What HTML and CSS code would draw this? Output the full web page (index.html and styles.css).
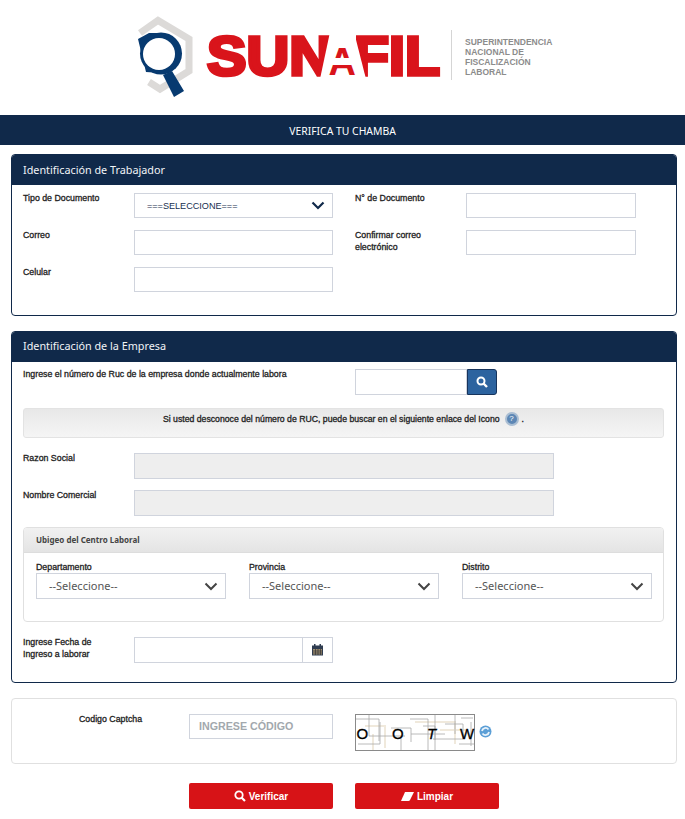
FILE: index.html
```html
<!DOCTYPE html>
<html lang="es">
<head>
<meta charset="utf-8">
<title>Verifica tu chamba</title>
<link rel="stylesheet" href="styles.css">
</head>
<body>
<header class="logo-wrap">
  <svg class="logo" width="420" height="84" viewBox="0 0 420 84">
    <path d="M14 67 L25 74 L54 56 L54 24 L23 5.500 L5 18" fill="none" stroke="#dcdad8" stroke-width="7"/>
    <circle cx="26" cy="38.500" r="21" fill="#073a70"/>
    <path d="M3 24 L11 57 L26 58 L26 18 L14 18 Z M37 56 L49 76 L39 82 L28 60 Z" fill="#073a70"/>
    <circle cx="24" cy="39" r="16" fill="#fff"/>
    <text class="logo-word" x="72" y="60" textLength="125" lengthAdjust="spacingAndGlyphs">SUN</text>
    <text class="logo-word" x="219" y="60" textLength="86" lengthAdjust="spacingAndGlyphs">FIL</text>
    <path d="M195 17 H212 V64 H185 Z" fill="#fff"/>
    <path d="M212 17 H219 L231 64 H212 Z" fill="#fff"/>
    <text class="logo-a" x="193.500" y="60">A</text>
    <rect x="194" y="43" width="24" height="7" fill="#fff"/>
    <rect x="316" y="15" width="1" height="50" fill="#d5d5d5"/>
    <text class="logo-sub" x="330" y="30">SUPERINTENDENCIA</text>
    <text class="logo-sub" x="330" y="40">NACIONAL DE</text>
    <text class="logo-sub" x="330" y="50">FISCALIZACIÓN</text>
    <text class="logo-sub" x="330" y="60">LABORAL</text>
  </svg>
</header>
<div class="title-bar">VERIFICA TU CHAMBA</div>

<main class="content">
  <section class="panel panel-worker">
    <h2 class="panel-head">Identificación de Trabajador</h2>
    <div class="panel-body form-grid">
      <label class="lbl">Tipo de Documento</label>
      <div class="field select select-doc"><span>===SELECCIONE===</span>
        <svg class="chev" width="14" height="9" viewBox="0 0 14 9"><path d="M1.500 1.500 L7 7 L12.500 1.500" fill="none" stroke="#10294a" stroke-width="2.200"/></svg>
      </div>
      <label class="lbl lbl-second">N° de Documento</label>
      <div class="field narrow"></div>
      <label class="lbl">Correo</label>
      <div class="field"></div>
      <label class="lbl lbl-second">Confirmar correo electrónico</label>
      <div class="field narrow"></div>
      <label class="lbl">Celular</label>
      <div class="field"></div>
    </div>
  </section>

  <section class="panel panel-company">
    <h2 class="panel-head">Identificación de la Empresa</h2>
    <div class="panel-body">
      <div class="ruc-row">
        <label class="lbl ruc-label">Ingrese el número de Ruc de la empresa donde actualmente labora</label>
        <div class="ruc-input"></div>
        <button class="ruc-btn" aria-label="Buscar">
          <svg width="12" height="12" viewBox="0 0 12 12"><circle cx="5" cy="5" r="3.500" fill="none" stroke="#fff" stroke-width="2"/><path d="M7.500 7.500 L11 11" stroke="#fff" stroke-width="2.400"/></svg>
        </button>
      </div>
      <div class="notice">
        <span>Si usted desconoce del número de RUC, puede buscar en el siguiente enlace del Icono</span>
        <span class="help-icon">?</span>
        <span>.</span>
      </div>
      <div class="wide-row"><label class="lbl">Razon Social</label><div class="field wide"></div></div>
      <div class="wide-row"><label class="lbl">Nombre Comercial</label><div class="field wide"></div></div>

      <div class="ubigeo">
        <h3 class="ubigeo-head">Ubigeo del Centro Laboral</h3>
        <div class="ubigeo-body">
          <div class="ubigeo-col"><label class="lbl">Departamento</label>
            <div class="field select big"><span>--Seleccione--</span>
              <svg class="chev" width="14" height="9" viewBox="0 0 14 9"><path d="M1.500 1.500 L7 7 L12.500 1.500" fill="none" stroke="#444" stroke-width="2"/></svg></div></div>
          <div class="ubigeo-col"><label class="lbl">Provincia</label>
            <div class="field select big"><span>--Seleccione--</span>
              <svg class="chev" width="14" height="9" viewBox="0 0 14 9"><path d="M1.500 1.500 L7 7 L12.500 1.500" fill="none" stroke="#444" stroke-width="2"/></svg></div></div>
          <div class="ubigeo-col"><label class="lbl">Distrito</label>
            <div class="field select big"><span>--Seleccione--</span>
              <svg class="chev" width="14" height="9" viewBox="0 0 14 9"><path d="M1.500 1.500 L7 7 L12.500 1.500" fill="none" stroke="#444" stroke-width="2"/></svg></div></div>
        </div>
      </div>

      <div class="date-row">
        <label class="lbl date-label">Ingrese Fecha de Ingreso a laborar</label>
        <div class="field date-field">
          <span class="date-addon">
            <svg width="11" height="12" viewBox="0 0 11 12"><rect x="0" y="1.500" width="11" height="10" fill="#2f3c50"/><rect x="1" y="5" width="9" height="5.500" fill="#a08f72"/><path d="M1 7 H10 M1 9 H10 M3.500 5 V11 M6 5 V11 M8.500 5 V11" stroke="#333" stroke-width=".7"/><rect x="2" y="0" width="1.500" height="2.500" fill="#2f3c50"/><rect x="7.500" y="0" width="1.500" height="2.500" fill="#2f3c50"/></svg>
          </span>
        </div>
      </div>
    </div>
  </section>

  <section class="captcha-panel">
    <label class="lbl captcha-label">Codigo Captcha</label>
    <div class="field captcha-input">INGRESE CÓDIGO</div>
    <svg class="captcha-img" width="120" height="37" viewBox="0 0 120 37">
      <rect width="120" height="37" fill="#fff"/>
      <path d="M10 12 H30 V34 M60 8 H100 V30 M18 20 V37 M85 16 H112" fill="none" stroke="#f0e9dc" stroke-width="2"/>
      <path d="M0 5 H24 V27 M14 0 V22 H50 M25 8 V30 H3 M36 14 H56 V28 M46 37 V24 M55 5 H73 V37 M56 20 H90 M68 12 H80 V26 M80 0 V36 M90 10 H108 V25 H78 M100 0 V20 M106 4 H118 M116 8 V32 M104 30 H120" fill="none" stroke="#a8a8a8" stroke-width=".8"/>
      <rect x="0.500" y="0.500" width="119" height="36" fill="none" stroke="#8a8a8a"/>
      <text class="captcha-text" x="1.500" y="25">O</text>
      <text class="captcha-text" x="37" y="25">O</text>
      <text class="captcha-text italic" x="72" y="25">T</text>
      <text class="captcha-text" x="105" y="25">W</text>
    </svg>
    <svg class="refresh" width="13" height="13" viewBox="0 0 13 13">
      <circle cx="6.500" cy="6.500" r="6" fill="#5c9fd6"/>
      <path d="M3 6 A3.600 3.600 0 0 1 9.500 4.500 M10 7 A3.600 3.600 0 0 1 3.500 8.500" fill="none" stroke="#e8f2fa" stroke-width="1.800"/>
    </svg>
  </section>

  <div class="actions">
    <button class="btn">
      <svg width="12" height="12" viewBox="0 0 12 12"><circle cx="5" cy="5" r="3.700" fill="none" stroke="#fff" stroke-width="1.800"/><path d="M7.500 7.500 L11 11" stroke="#fff" stroke-width="2.200"/></svg>
      Verificar
    </button>
    <button class="btn">
      <svg width="13" height="9" viewBox="0 0 13 9"><path d="M4 0 H13 L9 8 Q8.500 9 7.500 9 H0 Z" fill="#fff"/></svg>
      Limpiar
    </button>
  </div>
</main>
</body>
</html>
```

FILE: styles.css
```css
* { box-sizing: border-box; }
html, body { margin: 0; padding: 0; background: #fff; }
body { font-family: "Liberation Sans", Arial, sans-serif; color: #111; width: 685px; overflow-x: hidden; }

.logo-wrap { height: 115px; display: flex; justify-content: flex-start; padding: 15px 0 0 135px; }
.logo { display: block; overflow: visible; }
.logo-word { font-family: "Liberation Sans", Arial, sans-serif; font-weight: 700; font-size: 55px; fill: #d9141b; stroke: #d9141b; stroke-width: 3.500px; }
.logo-a { font-family: "Liberation Sans", Arial, sans-serif; font-weight: 700; font-size: 38px; fill: #d9141b; }
.logo-sub { font-family: "Liberation Sans", Arial, sans-serif; font-weight: 700; font-size: 8.500px; fill: #8c8c8c; }

.title-bar { height: 30px; padding-top: 1px; background: #10294a; color: #fff; font-family: "Noto Sans", sans-serif; font-size: 10.400px; display: flex; align-items: center; justify-content: center; }

.content { padding: 9px 8px 0 11px; }

.panel { width: 666px; border: 1px solid #10294a; border-radius: 4px; overflow: hidden; }
.panel-worker { height: 162px; }
.panel-company { height: 352px; margin-top: 15px; }
.panel-head { margin: 0; height: 30px; background: #10294a; color: #f2f4f7; font-family: "Noto Sans", "Open Sans", sans-serif; font-size: 10.800px; font-weight: 400; line-height: 30px; padding-left: 11px; }
.panel-company .panel-head { line-height: 28px; }
.panel-body { padding: 7px 11px 0; }

.lbl { display: block; font-size: 8.800px; font-weight: 400; line-height: 12px; color: #222; -webkit-text-stroke: .3px #222; }

.field { display: block; height: 25px; border: 1px solid #d0d4dd; background: #fff; width: 199px; }
.narrow { width: 170px; }

.form-grid { display: grid; grid-template-columns: 111px 199px 133px 170px; row-gap: 12px; align-items: start; padding-top: 8px; }
.form-grid .lbl { margin-top: -1px; }
.form-grid .lbl-second { margin-left: 22px; width: 90px; }

.select { display: flex; align-items: center; justify-content: space-between; padding: 0 7px 0 12px; }
.select-doc { font-size: 9.100px; color: #17304f; }
.select.big { width: 190px; height: 26px; font-family: "Noto Sans", "Open Sans", sans-serif; font-size: 11px; color: #555; }
.select.big span { padding-bottom: 2px; }

.ruc-row { display: flex; align-items: flex-start; height: 26px; }
.ruc-label { width: 332px; margin-top: -1px; }
.ruc-input { width: 112px; height: 26px; border: 1px solid #d0d4dd; }
.ruc-btn { width: 30px; height: 26px; padding: 0; display: flex; align-items: center; justify-content: center; background: #2c639f; border: 1px solid #17345c; border-radius: 0 3px 3px 0; }

.notice { margin-top: 13px; width: 641px; height: 30px; border: 1px solid #e3e3e3; border-radius: 3px; background: linear-gradient(#e8e8e8, #f5f5f5); display: flex; align-items: flex-start; justify-content: center; gap: 3px; padding-top: 3px; font-size: 8.700px; line-height: 14px; color: #222; -webkit-text-stroke: .3px #222; }
.help-icon { width: 14px; height: 14px; border-radius: 50%; background: #5d87b5; border: 2px solid #aabed3; color: #fff; font-size: 8px; line-height: 10px; text-align: center; margin-left: 2px; -webkit-text-stroke: 0; }

.wide-row { display: flex; align-items: flex-start; margin-top: 15px; }
.wide-row + .wide-row { margin-top: 11px; }
.wide-row .lbl { width: 111px; margin-top: -1px; }
.field.wide { width: 420px; height: 26px; background: #eee; }

.ubigeo { width: 641px; height: 95px; margin-top: 11px; border: 1px solid #e0e0e0; border-radius: 4px; overflow: hidden; }
.ubigeo-head { margin: 0; height: 25px; background: linear-gradient(#f1f1f1, #e4e4e4); border-bottom: 1px solid #ddd; font-family: "Noto Sans", "Open Sans", sans-serif; font-size: 8px; font-weight: 700; line-height: 24px; color: #444; padding-left: 12px; }
.ubigeo-body { display: flex; gap: 23px; padding: 8px 12px 0; }
.ubigeo-col { width: 190px; }

.date-row { display: flex; align-items: flex-start; margin-top: 15px; }
.date-label { width: 111px; padding-right: 30px; margin-top: -1px; }
.date-field { display: flex; justify-content: flex-end; height: 26px; }
.date-addon { width: 30px; height: 100%; border-left: 1px solid #d0d4dd; display: flex; align-items: center; justify-content: center; }

.captcha-panel { width: 666px; height: 66px; margin-top: 15px; border: 1px solid #e0e0e0; border-radius: 4px; display: flex; align-items: flex-start; padding-top: 15px; }
.captcha-label { width: 177px; padding-left: 67px; margin-top: -1px; }
.captcha-input { width: 144px; height: 25px; font-size: 10.700px; font-weight: 700; color: #a2a8ad; line-height: 23px; padding-left: 9px; }
.captcha-img { display: block; margin-left: 22px; }
.captcha-text { font-family: "Liberation Sans", Arial, sans-serif; font-size: 15px; font-weight: 400; fill: #000; stroke: #000; stroke-width: .3px; }
.italic { font-style: italic; }
.refresh { display: block; margin: 11px 0 0 4px; }

.actions { display: flex; gap: 22px; padding: 19px 0 0 178px; }
.btn { width: 144px; height: 26px; border: 0; border-radius: 2px; background: #d71317; color: #fff; font-family: "Liberation Sans", Arial, sans-serif; font-size: 10px; font-weight: 700; display: flex; align-items: center; justify-content: center; gap: 3px; padding: 0; }
```
